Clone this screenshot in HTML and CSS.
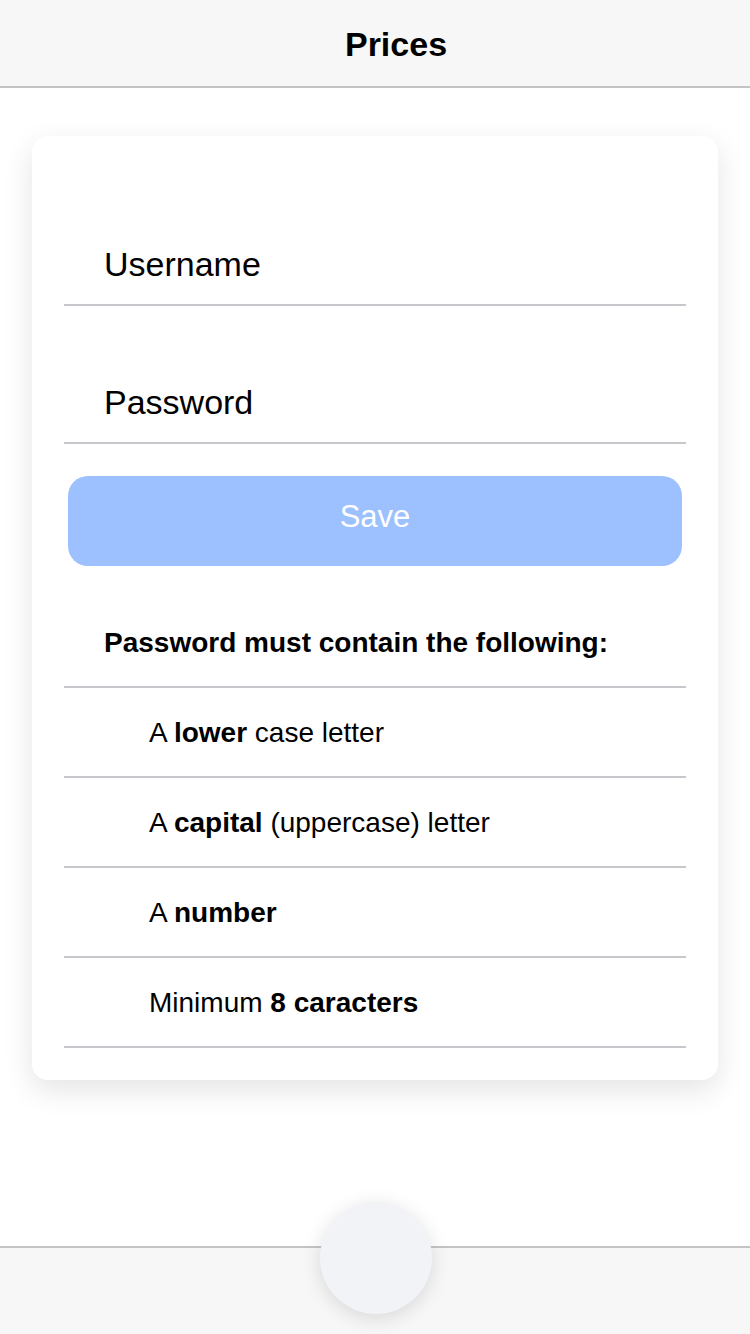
FILE: index.html
```html
<!DOCTYPE html>
<html>
<head>
<meta charset="utf-8">
<link rel="stylesheet" href="styles.css">
</head>
<body>
<div class="app">
  <header class="topbar"><h1 class="title">Prices</h1></header>
  <main class="content">
    <section class="card">
      <div class="field"><span class="field-label">Username</span></div>
      <div class="field"><span class="field-label">Password</span></div>
      <button class="save-btn">Save</button>
      <div class="rules-head">Password must contain the following:</div>
      <ul class="rules">
        <li class="rule">A <b>lower</b> case letter</li>
        <li class="rule">A <b>capital</b> (uppercase) letter</li>
        <li class="rule">A <b>number</b></li>
        <li class="rule">Minimum <b>8 caracters</b></li>
      </ul>
    </section>
  </main>
  <footer class="tabbar"><div class="tab-circle"></div></footer>
</div>
</body>
</html>
```
FILE: styles.css
```css
* { box-sizing: border-box; }
html, body { margin: 0; padding: 0; background: #fff; }
body { font-family: "Liberation Sans", Arial, sans-serif; color: #000; }
.app { height: 1334px; display: flex; flex-direction: column; overflow: hidden; }
.topbar {
  height: 88px; background: #f7f7f7; border-bottom: 2px solid #c4c4c4;
  display: flex; align-items: center; justify-content: center; flex-shrink: 0;
}
.title { margin: 0; font-size: 34px; font-weight: bold; line-height: 40px; padding-left: 42px; padding-top: 2px; }
.content { flex: 1; padding: 48px 32px 0; }
.card {
  background: #fff; border-radius: 16px; padding: 32px;
  box-shadow: 0 10px 30px rgba(0,0,0,0.11);
}
.field {
  height: 138px; border-bottom: 2px solid #c8c7cc;
  display: flex; align-items: flex-end; padding: 0 0 20px 40px;
}
.field-label { font-size: 34px; line-height: 40px; }
.save-btn {
  display: block; width: 614px; height: 90px; margin: 32px 4px 0;
  border: none; border-radius: 20px; background: #9dc0ff; color: #fff;
  font-family: "Liberation Sans", Arial, sans-serif; font-size: 31px; padding: 0 0 8px;
}
.rules-head {
  margin-top: 32px; height: 90px; border-bottom: 2px solid #c8c7cc;
  display: flex; align-items: center; padding: 2px 0 0 40px;
  font-size: 28px; font-weight: bold;
}
.rules { list-style: none; margin: 0; padding: 0; }
.rule {
  height: 90px; border-bottom: 2px solid #c8c7cc;
  display: flex; align-items: center; padding: 2px 0 0 85px; font-size: 28px;
  white-space: pre;
}
.tabbar {
  height: 88px; flex-shrink: 0; background: #f7f7f7; border-top: 2px solid #c4c4c4;
  position: relative;
}
.tab-circle {
  position: absolute; left: 320px; top: -46px; width: 112px; height: 112px;
  border-radius: 50%; background: #f2f3f7;
  box-shadow: 0 4px 20px rgba(0,0,0,0.13);
}
```
